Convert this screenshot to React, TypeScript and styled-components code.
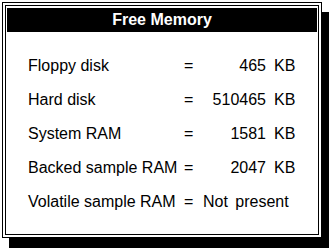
import styled, { createGlobalStyle } from 'styled-components';

const GlobalStyle = createGlobalStyle`
  html, body {
    margin: 0;
    padding: 0;
    background: #ffffff;
  }
  body {
    font-family: "Liberation Sans", Arial, sans-serif;
  }
`;

const Screen = styled.div`
  width: 332px;
  height: 248px;
  overflow: hidden;
  background: #ffffff;
  padding: 2px 0 0 2px;
  box-sizing: border-box;
`;

const Window = styled.div`
  width: 320px;
  height: 236px;
  box-sizing: border-box;
  border: 1px solid #000;
  padding: 2px;
  background: #ffffff;
  box-shadow: 7px 10px 0 0 #000;
`;

const Inner = styled.div`
  height: 100%;
  box-sizing: border-box;
  border: 1px solid #000;
  padding: 1px;
  display: flex;
  flex-direction: column;
`;

const TitleBar = styled.div`
  height: 24px;
  margin-top: 1px;
  background: #000;
  color: #fff;
  font-weight: bold;
  font-size: 16px;
  line-height: 24px;
  text-align: center;
`;

const Table = styled.div`
  padding: 17px 0 0 21px;
  display: flex;
  flex-direction: column;
`;

const Row = styled.div`
  display: grid;
  grid-template-columns: 155px 16px 67px 8px 28px;
  height: 34px;
  line-height: 34px;
  font-size: 16px;
  color: #000;
  white-space: nowrap;
`;

const Label = styled.span``;

const Equals = styled.span`
  padding-left: 1px;
`;

const Value = styled.span<{ $wide?: boolean }>`
  text-align: ${p => (p.$wide ? 'left' : 'right')};
  grid-column: ${p => (p.$wide ? '3 / 6' : 'auto')};
  padding-left: ${p => (p.$wide ? '4px' : '0')};
  word-spacing: ${p => (p.$wide ? '3px' : '0')};
`;

const Unit = styled.span`
  grid-column: 5;
`;

const rows = [
  { label: 'Floppy disk', value: '465', unit: 'KB' },
  { label: 'Hard disk', value: '510465', unit: 'KB' },
  { label: 'System RAM', value: '1581', unit: 'KB' },
  { label: 'Backed sample RAM', value: '2047', unit: 'KB' },
  { label: 'Volatile sample RAM', value: 'Not present', unit: '' },
];

export default function App() {
  return (
    <>
      <GlobalStyle />
      <Screen>
        <Window>
          <Inner>
            <TitleBar>Free Memory</TitleBar>
            <Table>
              {rows.map(r => (
                <Row key={r.label}>
                  <Label>{r.label}</Label>
                  <Equals>=</Equals>
                  {r.unit ? (
                    <>
                      <Value>{r.value}</Value>
                      <Unit>{r.unit}</Unit>
                    </>
                  ) : (
                    <Value $wide>{r.value}</Value>
                  )}
                </Row>
              ))}
            </Table>
          </Inner>
        </Window>
      </Screen>
    </>
  );
}
